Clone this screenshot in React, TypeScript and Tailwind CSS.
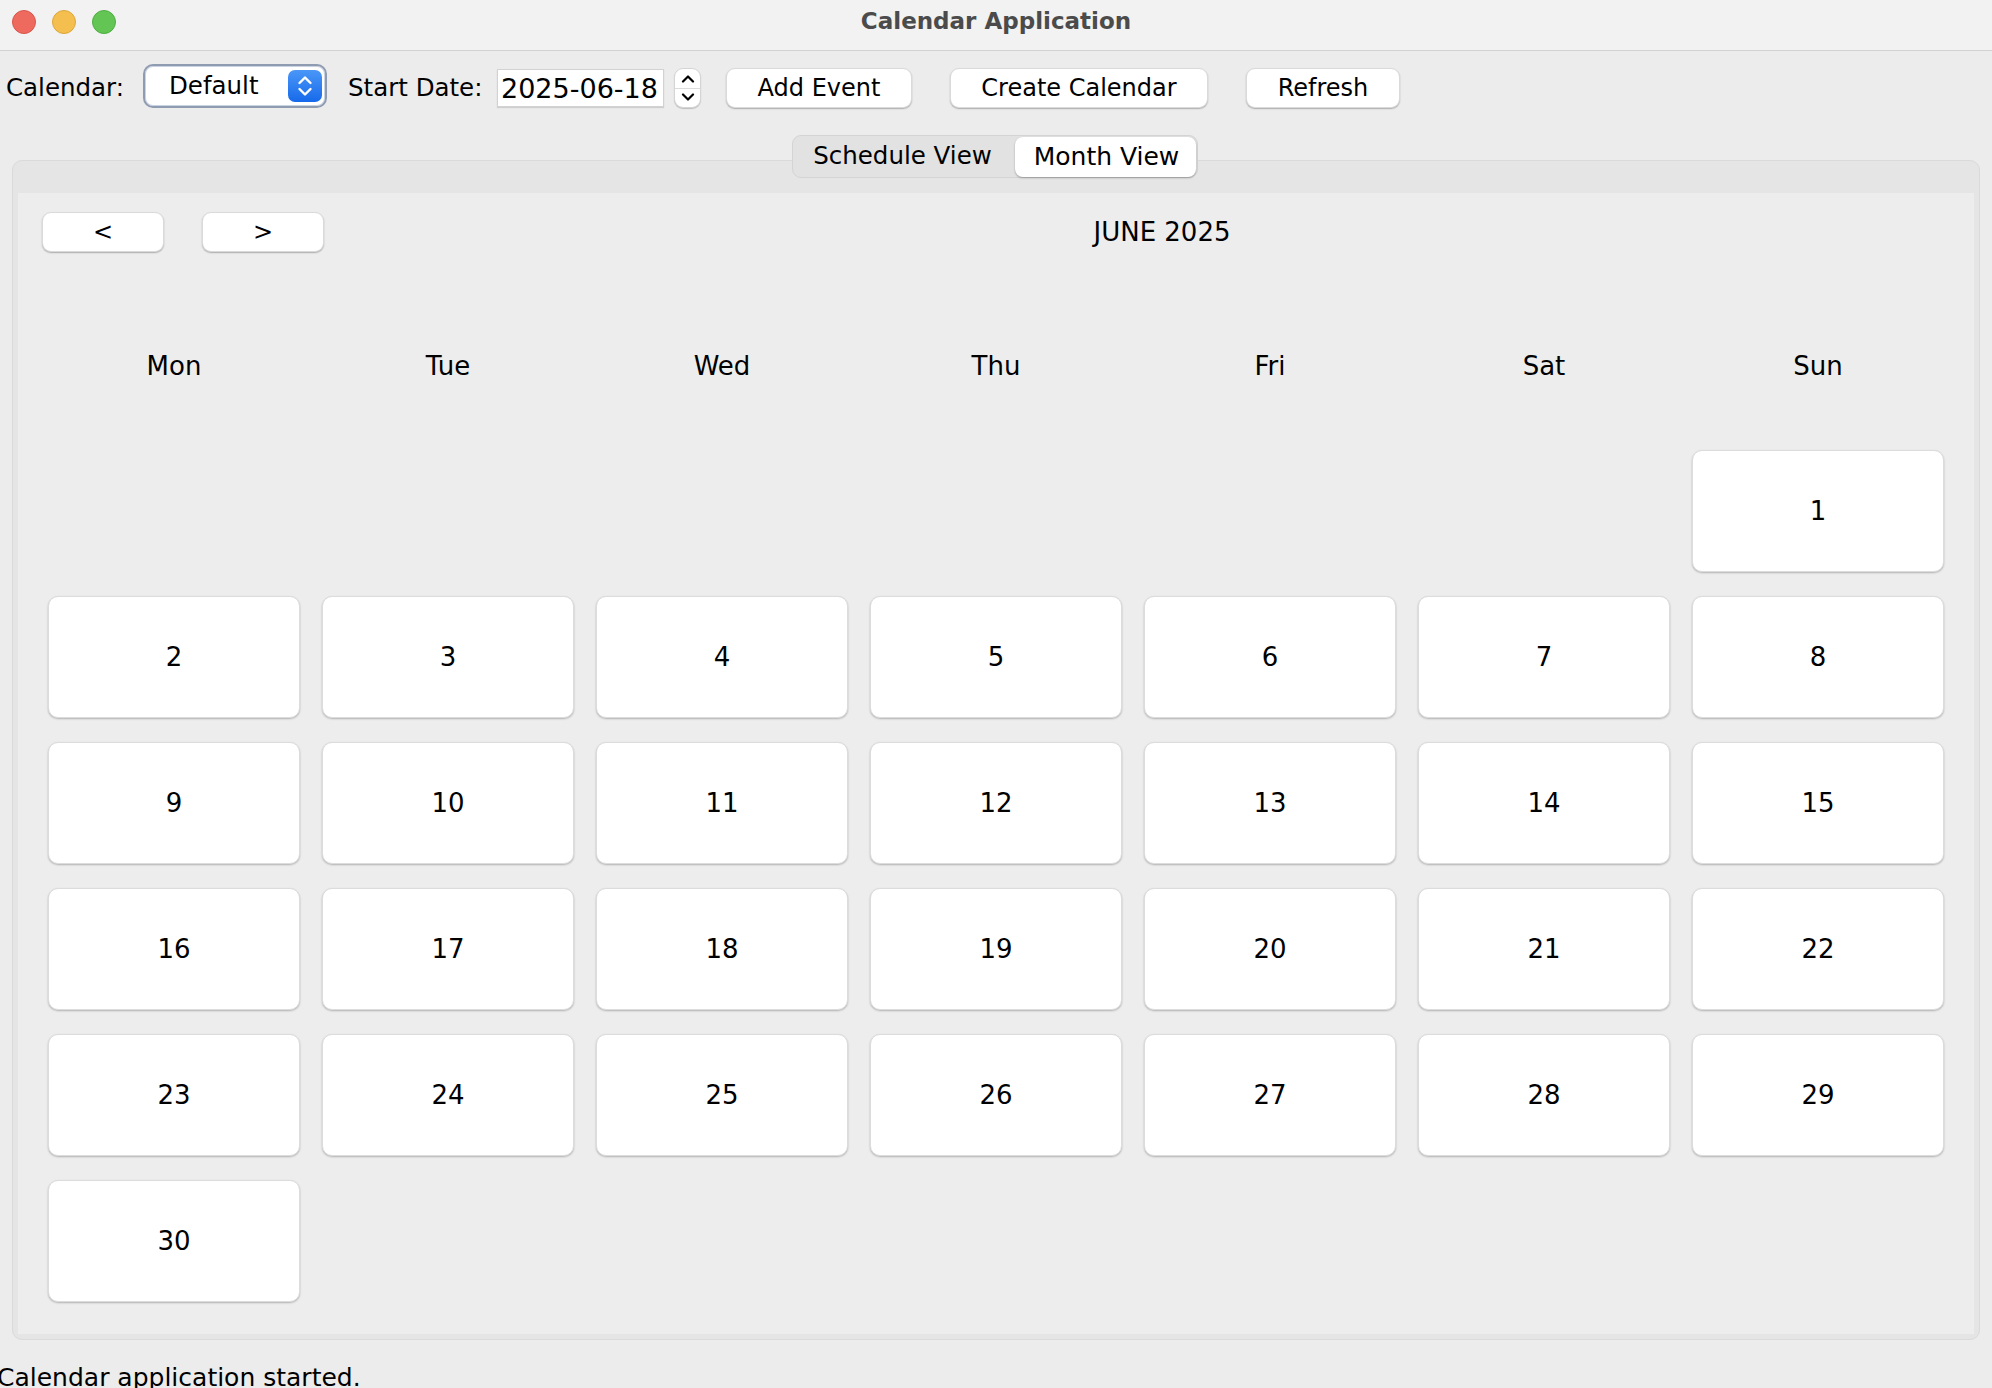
import React from "react";

const weekdays = ["Mon", "Tue", "Wed", "Thu", "Fri", "Sat", "Sun"];
const days = Array.from({ length: 30 }, (_, i) => i + 1);

function UpDown({ className }: { className?: string }) {
  return (
    <svg viewBox="0 0 20 28" className={className} fill="none" stroke="currentColor" strokeWidth="2.4" strokeLinecap="round" strokeLinejoin="round">
      <path d="M4.5 11 L10 5.5 L15.5 11" />
      <path d="M4.5 17 L10 22.5 L15.5 17" />
    </svg>
  );
}

function MacButton({ label, className }: { label: string; className?: string }) {
  return (
    <button
      className={`h-[40px] rounded-[9px] bg-white border border-[#dadada] shadow-[0_1px_1.5px_rgba(0,0,0,0.28)] text-[24px] leading-none text-black flex items-center justify-center ${className ?? ""}`}
    >
      {label}
    </button>
  );
}

export default function App() {
  return (
    <div className="w-[1992px] h-[1388px] overflow-hidden bg-[#ececec] text-black font-['DejaVu_Sans',sans-serif]">
      {/* title bar */}
      <div className="h-[51px] bg-[#f1f2f1] border-b border-[#d2d2d2] grid grid-cols-[1fr_auto_1fr] items-start">
        <div className="flex gap-[16px] pl-[12px] pt-[10px]">
          <span className="w-[24px] h-[24px] rounded-full bg-[#ee6a5f] border border-[#d9564b]" />
          <span className="w-[24px] h-[24px] rounded-full bg-[#f5bf4f] border border-[#dca73a]" />
          <span className="w-[24px] h-[24px] rounded-full bg-[#62c554] border border-[#4fae42]" />
        </div>
        <div className="pt-[6px] text-[23px] font-bold text-[#4b4b4b] leading-[30px]">Calendar Application</div>
        <div />
      </div>

      {/* toolbar */}
      <div className="mt-[13px] h-[44px] flex items-end">
        <span className="ml-[6px] w-[137px] text-[24.5px] leading-[40px]">Calendar:</span>
        <div className="w-[184px] h-[44px] rounded-[10px] border-2 border-[#8e9bb0] bg-white flex items-center pl-[24px] pr-[3px] shadow-[inset_0_0_0_1px_#c9d3e2]">
          <span className="flex-1 text-[24.5px] leading-none">Default</span>
          <span className="w-[34px] h-[32px] rounded-[7px] bg-gradient-to-b from-[#4a97f8] to-[#1569ea] flex items-center justify-center text-white">
            <UpDown className="w-[20px] h-[28px]" />
          </span>
        </div>
        <span className="ml-[21px] w-[149px] text-[24.5px] leading-[40px]">Start Date:</span>
        <div className="w-[167px] h-[38px] mb-[1px] bg-white border border-[#d2d2d2] shadow-[0_1px_1px_rgba(0,0,0,0.12)] flex items-center pl-[3px] text-[27px] leading-none">
          2025-06-18
        </div>
        <div className="ml-[10px] w-[27px] h-[40px] rounded-[9px] bg-white border border-[#d5d5d5] shadow-[0_1px_1px_rgba(0,0,0,0.2)] flex flex-col">
          <div className="flex-1 flex items-center justify-center border-b border-[#dcdcdc]">
            <svg viewBox="0 0 14 9" className="w-[14px] h-[9px]" fill="none" stroke="black" strokeWidth="2.2" strokeLinecap="round" strokeLinejoin="round">
              <path d="M2 7.5 L7 2.5 L12 7.5" />
            </svg>
          </div>
          <div className="flex-1 flex items-center justify-center">
            <svg viewBox="0 0 14 9" className="w-[14px] h-[9px]" fill="none" stroke="black" strokeWidth="2.2" strokeLinecap="round" strokeLinejoin="round">
              <path d="M2 1.5 L7 6.5 L12 1.5" />
            </svg>
          </div>
        </div>
        <MacButton label="Add Event" className="ml-[25px] w-[186px]" />
        <MacButton label="Create Calendar" className="ml-[38px] w-[258px]" />
        <MacButton label="Refresh" className="ml-[38px] w-[154px]" />
      </div>

      {/* tabs */}
      <div className="mt-[27px] flex justify-center relative z-10">
        <div className="ml-[-2px] h-[43px] w-[406px] rounded-[9px] bg-[#e2e2e2] border border-[#d4d4d4] flex items-center p-[1px]">
          <span className="w-[221px] text-center leading-none text-[24.5px] pr-[4px]">Schedule View</span>
          <span className="flex-1 h-[40px] rounded-[8px] bg-white shadow-[0_1px_2px_rgba(0,0,0,0.3)] flex items-center justify-center leading-none text-[25px] pl-[2px]">
            Month View
          </span>
        </div>
      </div>

      {/* panel */}
      <div className="mx-[12px] mt-[-18px] h-[1180px] rounded-[10px] border border-[#dadada] bg-[#e5e5e5] pt-[32px] px-[5px] pb-[5px]">
        <div className="h-full bg-[#ededed] pt-[19px]">
          <div className="flex items-center pl-[24px] pr-[24px]">
            <MacButton label="<" className="w-[122px]" />
            <MacButton label=">" className="ml-[38px] w-[122px]" />
            <div className="flex-1 ml-[50px] text-center text-[26px] leading-none">JUNE 2025</div>
          </div>
          <div className="mt-[52px] ml-[30px] w-[1896px] grid grid-cols-7 gap-x-[22px] gap-y-[24px] auto-rows-[122px]">
            {weekdays.map((d) => (
              <div key={d} className="flex items-center justify-center text-[26px] pt-[2px]">
                {d}
              </div>
            ))}
            {Array.from({ length: 6 }, (_, i) => (
              <div key={`e${i}`} />
            ))}
            {days.map((d) => (
              <div
                key={d}
                className="bg-white rounded-[10px] border border-[#dcdcdc] shadow-[0_1px_2px_rgba(0,0,0,0.25)] flex items-center justify-center text-[26px]"
              >
                {d}
              </div>
            ))}
          </div>
        </div>
      </div>

      {/* status */}
      <div className="mt-[20px] ml-[-3px] text-[25px] leading-[36px] whitespace-nowrap">Calendar application started.</div>
    </div>
  );
}
